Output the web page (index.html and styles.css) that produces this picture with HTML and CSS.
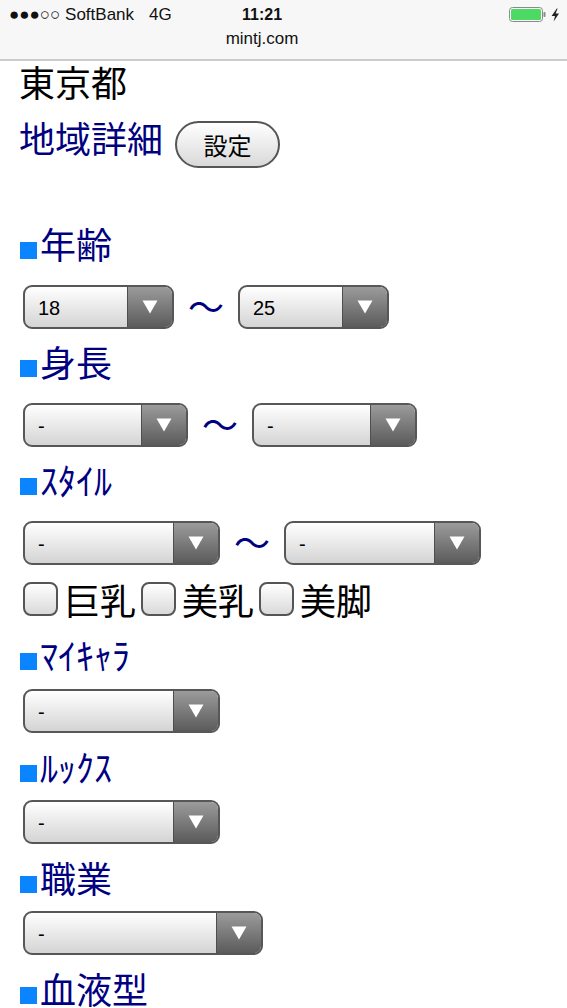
FILE: index.html
```html
<!DOCTYPE html>
<html lang="ja">
<head>
<meta charset="utf-8">
<title>mintj.com</title>
<link rel="stylesheet" href="styles.css">
</head>
<body>
<header class="status">
  <div class="status-row">
    <span class="carrier"><span class="dots">●●●○○</span> SoftBank<span class="net">4G</span></span>
    <span class="time">11:21</span>
    <span class="battery">
      <svg width="52" height="16" viewBox="0 0 52 16">
        <rect x="0.5" y="0.5" width="33" height="14" rx="3" ry="3" fill="none" stroke="#8a8a8a" stroke-width="1"/>
        <rect x="2" y="2" width="30" height="11" rx="1.5" ry="1.5" fill="#4cd964"/>
        <rect x="34.5" y="5" width="2" height="5" rx="0.8" fill="#8a8a8a"/>
        <polygon points="47.8,1.5 42.6,9 46,9 44.6,14.5 50,6.6 46.6,6.6 48.6,1.5" fill="#222"/>
      </svg>
    </span>
  </div>
  <div class="url">mintj.com</div>
</header>

<main class="content">
  <div class="pref">東京都</div>
  <div class="area">
    <span class="area-label">地域詳細</span>
    <span class="btn">設定</span>
  </div>

  <div class="heading first"><span class="mark"></span>年齢</div>
  <div class="range">
    <div class="select w151"><span class="val">18</span><span class="arrow"><svg width="16" height="14" viewBox="0 0 16 14"><polygon points="0.5,0.5 15.5,0.5 8,13.5" fill="#fff"/></svg></span></div>
    <span class="tilde">～</span>
    <div class="select w151"><span class="val">25</span><span class="arrow"><svg width="16" height="14" viewBox="0 0 16 14"><polygon points="0.5,0.5 15.5,0.5 8,13.5" fill="#fff"/></svg></span></div>
  </div>

  <div class="heading"><span class="mark"></span>身長</div>
  <div class="range">
    <div class="select w165"><span class="val">-</span><span class="arrow"><svg width="16" height="14" viewBox="0 0 16 14"><polygon points="0.5,0.5 15.5,0.5 8,13.5" fill="#fff"/></svg></span></div>
    <span class="tilde">～</span>
    <div class="select w165"><span class="val">-</span><span class="arrow"><svg width="16" height="14" viewBox="0 0 16 14"><polygon points="0.5,0.5 15.5,0.5 8,13.5" fill="#fff"/></svg></span></div>
  </div>

  <div class="heading"><span class="mark"></span>ｽﾀｲﾙ</div>
  <div class="range">
    <div class="select w197"><span class="val">-</span><span class="arrow"><svg width="16" height="14" viewBox="0 0 16 14"><polygon points="0.5,0.5 15.5,0.5 8,13.5" fill="#fff"/></svg></span></div>
    <span class="tilde">～</span>
    <div class="select w197"><span class="val">-</span><span class="arrow"><svg width="16" height="14" viewBox="0 0 16 14"><polygon points="0.5,0.5 15.5,0.5 8,13.5" fill="#fff"/></svg></span></div>
  </div>
  <div class="checks">
    <label class="check"><span class="box"></span>巨乳</label>
    <label class="check"><span class="box"></span>美乳</label>
    <label class="check"><span class="box"></span>美脚</label>
  </div>

  <div class="heading after-checks"><span class="mark"></span>ﾏｲｷｬﾗ</div>
  <div class="single">
    <div class="select w197"><span class="val">-</span><span class="arrow"><svg width="16" height="14" viewBox="0 0 16 14"><polygon points="0.5,0.5 15.5,0.5 8,13.5" fill="#fff"/></svg></span></div>
  </div>

  <div class="heading"><span class="mark"></span>ﾙｯｸｽ</div>
  <div class="single">
    <div class="select w197"><span class="val">-</span><span class="arrow"><svg width="16" height="14" viewBox="0 0 16 14"><polygon points="0.5,0.5 15.5,0.5 8,13.5" fill="#fff"/></svg></span></div>
  </div>

  <div class="heading"><span class="mark"></span>職業</div>
  <div class="single">
    <div class="select w240"><span class="val">-</span><span class="arrow"><svg width="16" height="14" viewBox="0 0 16 14"><polygon points="0.5,0.5 15.5,0.5 8,13.5" fill="#fff"/></svg></span></div>
  </div>

  <div class="heading"><span class="mark"></span>血液型</div>
</main>
</body>
</html>
```

FILE: styles.css
```css
html, body {
  margin: 0;
  padding: 0;
  background: #fff;
}
body {
  font-family: "Noto Sans CJK JP", sans-serif;
  color: #000;
  overflow: hidden;
  height: 1008px;
}

/* status bar */
.status {
  background: #f7f7f7;
  border-bottom: 2px solid #cbcbcb;
  height: 59px;
  font-family: "Liberation Sans", Arial, sans-serif;
  color: #111;
}
.status-row {
  display: grid;
  grid-template-columns: 233px 41px 1fr;
  height: 30px;
  line-height: 30px;
  padding: 0 6px 0 9px;
  font-size: 17px;
}
.dots {
  font-size: 17px;
}
.net {
  margin-left: 15px;
}
.time {
  font-weight: bold;
  font-size: 16px;
}
.battery {
  justify-self: end;
  display: flex;
  align-items: center;
  height: 30px;
}
.battery svg {
  display: block;
}
.url {
  height: 29px;
  line-height: 18px;
  font-size: 17px;
  text-align: center;
  padding-right: 43px;
}

/* content */
.content {
  padding-left: 19px;
  font-size: 36px;
}
.pref {
  height: 40px;
  line-height: 40px;
}
.area {
  display: flex;
  align-items: flex-start;
  margin-top: 16px;
}
.area-label {
  color: #000080;
  line-height: 40px;
}
.btn {
  margin: 4px 0 0 12px;
  width: 105px;
  height: 47px;
  box-sizing: border-box;
  border: 2px solid #555;
  border-radius: 24px;
  background: linear-gradient(#ffffff, #d9d9d9);
  font-size: 24px;
  line-height: 43px;
  text-align: center;
}

.heading {
  margin-top: 12px;
  height: 40px;
  line-height: 40px;
  color: #000080;
  white-space: nowrap;
}
.single + .heading {
  margin-top: 13px;
}
.heading.first {
  margin-top: 55px;
}
.heading.after-checks {
  margin-top: 15px;
}
.mark {
  display: inline-block;
  width: 17px;
  height: 17px;
  background: #0a84ff;
  margin: 0 3px 0 1px;
}

.range {
  display: flex;
  align-items: center;
  height: 44px;
  margin-top: 22px;
  padding-left: 4px;
}
.single {
  display: flex;
  margin-top: 14px;
  padding-left: 4px;
}
.after-checks + .single {
  margin-top: 15px;
}
.tilde {
  width: 64px;
  height: 44px;
  text-align: center;
  color: #000080;
  line-height: 40px;
}

.select {
  display: flex;
  height: 44px;
  box-sizing: border-box;
  border: 2px solid #575757;
  border-radius: 9px;
  overflow: hidden;
  background: linear-gradient(#ffffff, #d4d4d4);
}
.w151 { width: 151px; }
.w165 { width: 165px; }
.w197 { width: 197px; }
.w240 { width: 240px; }
.val {
  flex: 1;
  font-family: "Liberation Sans", Arial, sans-serif;
  font-size: 20px;
  line-height: 38px;
  padding: 2px 0 0 13px;
  color: #000;
}
.arrow {
  width: 45px;
  box-sizing: border-box;
  border-left: 1px solid #4e4e4e;
  background: linear-gradient(#9b9b9b, #5b5b5b);
  display: flex;
  align-items: center;
  justify-content: center;
}
.arrow svg {
  display: block;
}

.checks {
  display: flex;
  gap: 1px;
  margin-top: 14px;
  height: 40px;
}
.check {
  display: flex;
  align-items: center;
  line-height: 40px;
}
.box {
  width: 35px;
  height: 34px;
  box-sizing: border-box;
  border: 2px solid #555;
  border-radius: 8px;
  background: linear-gradient(#ffffff, #d9d9d9);
  margin: 0 6px 0 4px;
}
```
